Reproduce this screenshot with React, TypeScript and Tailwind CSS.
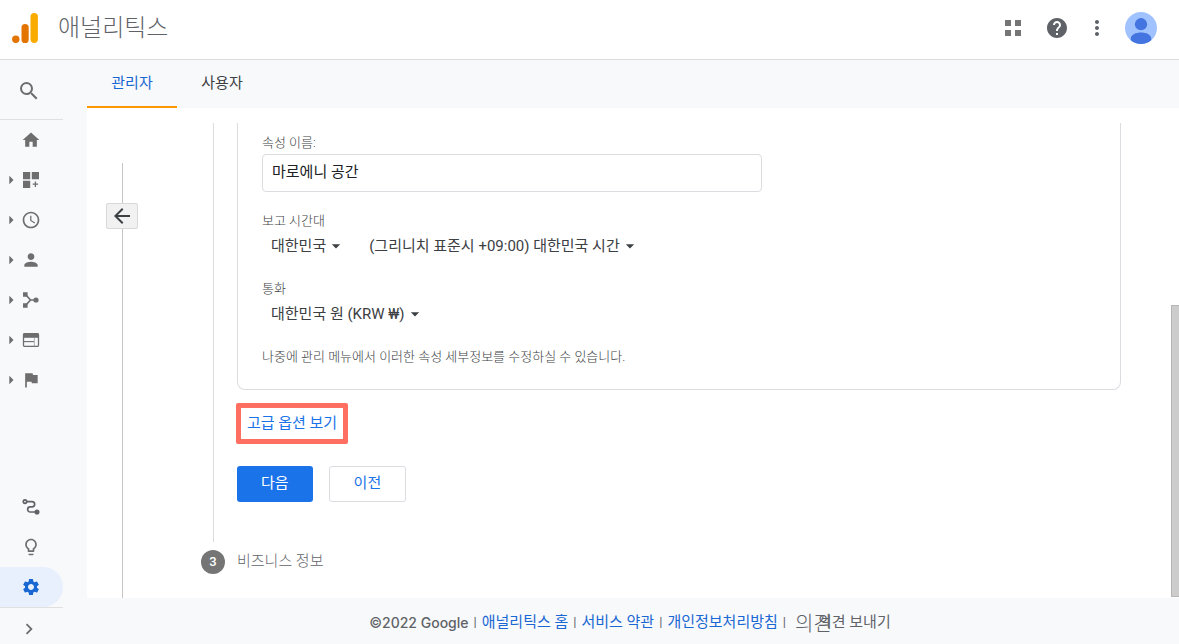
import React, { useState } from "react";
import type { ReactNode } from "react";
import {
  MdAccessTime,
  MdArrowBack,
  MdArrowDropDown,
  MdArrowRight,
  MdChevronRight,
  MdFlag,
  MdHelp,
  MdHome,
  MdLightbulbOutline,
  MdMoreVert,
  MdPerson,
  MdSearch,
  MdSettings,
} from "react-icons/md";

function AnalyticsLogo() {
  return (
    <svg width="28" height="32" viewBox="0 0 28 32" aria-hidden="true">
      <circle cx="3.8" cy="27.2" r="3.7" fill="#e37400" />
      <rect x="9.5" y="12" width="7.2" height="19" rx="3.6" fill="#e37400" />
      <rect x="18.5" y="1" width="7.4" height="30" rx="3.7" fill="#f9ab00" />
    </svg>
  );
}

function AppsIcon() {
  return (
    <svg width="24" height="24" viewBox="0 0 24 24" fill="#757575" aria-hidden="true">
      <path d="M4 4h6v6H4zM14 4h6v6h-6zM4 14h6v6H4zM14 14h6v6h-6z" />
    </svg>
  );
}

function AvatarIcon() {
  return (
    <svg width="32" height="32" viewBox="0 0 32 32" aria-hidden="true">
      <circle cx="16" cy="16" r="16" fill="#a0c3ff" />
      <circle cx="16" cy="12.2" r="6.1" fill="#4374e0" />
      <path d="M5.8 26.4c0-3.9 5.1-6 10.2-6s10.2 2.1 10.2 6v1.8A16 16 0 0 1 16 32a16 16 0 0 1-10.2-3.8z" fill="#4374e0" />
    </svg>
  );
}

function DashboardIcon() {
  return (
    <svg width="20" height="20" viewBox="0 0 20 20" aria-hidden="true">
      <path d="M2 2h7.200v7.200H2zM10.800 2H18v7.200h-7.200zM2 10.800h7.200V18H2z" fill="#6e6e6e" />
      <path d="M14.400 11.500v5.400M11.700 14.200h5.400" stroke="#6e6e6e" strokeWidth="1.300" />
    </svg>
  );
}

function MergeIcon() {
  return (
    <svg width="20" height="20" viewBox="0 0 20 20" aria-hidden="true">
      <path d="M4.500 4.500L9.500 10L4.500 15.500M9.500 10H15" fill="none" stroke="#6e6e6e" strokeWidth="1.700" />
      <path d="M2 2.300h4.600v4.500H2zM2 13.200h4.600v4.500H2z" fill="#6e6e6e" />
      <circle cx="15" cy="10" r="2.600" fill="#6e6e6e" />
    </svg>
  );
}

function WebIcon() {
  return (
    <svg width="20" height="20" viewBox="0 0 20 20" aria-hidden="true">
      <rect x="2.500" y="3.700" width="15" height="12.700" rx="1.200" fill="none" stroke="#6e6e6e" strokeWidth="1.300" />
      <path d="M2 3.600h16v4.200H2z" fill="#6e6e6e" />
      <path d="M2.500 11.600h10.500" stroke="#6e6e6e" strokeWidth="1.100" />
      <path d="M13.400 7.800v8.200" stroke="#6e6e6e" strokeWidth="1" strokeOpacity="0.500" />
    </svg>
  );
}

function RouteIcon() {
  return (
    <svg width="20" height="20" viewBox="0 0 20 20" fill="none" stroke="#5f6368" strokeWidth="1.700" aria-hidden="true">
      <circle cx="4" cy="4.600" r="1.700" />
      <path d="M5.800 4.600H11a2.600 2.600 0 0 1 0 5.300H9.200a2.500 2.500 0 0 0 0 5.100H15" />
      <circle cx="16" cy="15" r="1.700" fill="#5f6368" />
    </svg>
  );
}

function NavItem({
  label,
  children,
  expandable = false,
  active = false,
}: {
  label: string;
  children: ReactNode;
  expandable?: boolean;
  active?: boolean;
}) {
  return (
    <li>
      <button
        type="button"
        aria-label={label}
        className={
          active
            ? "flex h-10 w-full items-center rounded-r-full bg-[#e8f0fe] pl-px text-[#1967d2]"
            : "flex h-10 w-full items-center pl-px text-[#6e6e6e]"
        }
      >
        <span className="flex w-5 shrink-0">{expandable && <MdArrowRight size={20} />}</span>
        {children}
      </button>
    </li>
  );
}

function InlineSelect({ id, label, value }: { id: string; label: string; value: string }) {
  return (
    <span className="grid items-center">
      <select
        id={id}
        aria-label={label}
        defaultValue={value}
        className="col-start-1 row-start-1 h-5 appearance-none bg-transparent pr-5 text-[15px] leading-5 font-normal text-[#3c4043] outline-none [field-sizing:content]"
      >
        <option>{value}</option>
      </select>
      <MdArrowDropDown
        size={20}
        className="pointer-events-none col-start-1 row-start-1 justify-self-end text-[#3c4043]"
      />
    </span>
  );
}

function Sidebar() {
  return (
    <nav className="flex w-[63px] shrink-0 flex-col">
      <div className="flex h-15 items-center border-b border-[#e0e0e0] pt-0.5 pl-[17px]">
        <button type="button" aria-label="검색" className="text-[#6e6e6e]">
          <MdSearch size={24} />
        </button>
      </div>
      <ul>
        <NavItem label="홈"><MdHome size={20} /></NavItem>
        <NavItem label="맞춤설정" expandable><DashboardIcon /></NavItem>
        <NavItem label="실시간" expandable><MdAccessTime size={20} /></NavItem>
        <NavItem label="잠재고객" expandable><MdPerson size={20} /></NavItem>
        <NavItem label="획득" expandable><MergeIcon /></NavItem>
        <NavItem label="행동" expandable><WebIcon /></NavItem>
        <NavItem label="전환" expandable><MdFlag size={20} /></NavItem>
      </ul>
      <ul className="mt-auto border-b border-[#e0e0e0]">
        <NavItem label="기여"><RouteIcon /></NavItem>
        <NavItem label="탐색"><MdLightbulbOutline size={20} /></NavItem>
        <NavItem label="관리" active><MdSettings size={20} /></NavItem>
      </ul>
      <button type="button" aria-label="펼치기" className="flex h-9 items-center pt-1.5 pl-[18px] text-[#6e6e6e]">
        <MdChevronRight size={22} />
      </button>
    </nav>
  );
}

function PropertyCard() {
  const [name, setName] = useState("마로에니 공간");
  return (
    <section className="rounded-b-lg border border-t-0 border-[#dadce0] px-6 pt-2.5 pb-[22px]">
      <label htmlFor="property-name" className="block text-[13px] leading-5 text-[#3c4043]">
        속성 이름:
      </label>
      <input
        id="property-name"
        value={name}
        onChange={(e) => setName(e.target.value)}
        className="mt-px block h-[38px] w-full max-w-[500px] rounded border border-[#dadce0] bg-white px-[9px] pb-1.5 text-[15px] font-normal text-[#202124] outline-none"
      />
      <label htmlFor="country" className="mt-[19px] block text-[13px] leading-5 text-[#3c4043]">
        보고 시간대
      </label>
      <div className="mt-[5px] flex gap-[23px] pl-[9px]">
        <InlineSelect id="country" label="국가" value="대한민국" />
        <InlineSelect id="timezone" label="시간대" value="(그리니치 표준시 +09:00) 대한민국 시간" />
      </div>
      <label htmlFor="currency" className="mt-[23px] block text-[13px] leading-5 text-[#3c4043]">
        통화
      </label>
      <div className="mt-[5px] flex pl-[9px]">
        <InlineSelect id="currency" label="통화" value="대한민국 원 (KRW ₩)" />
      </div>
      <p className="mt-[23px] text-[13px] leading-5 text-[#3c4043]">
        나중에 관리 메뉴에서 이러한 속성 세부정보를 수정하실 수 있습니다.
      </p>
    </section>
  );
}

function Wizard() {
  return (
    <div className="mt-[15px] ml-[63px] flex-1">
      <div className="flex gap-3">
        <div className="flex w-6 justify-center">
          <div className="w-px bg-[#dadce0]" />
        </div>
        <div className="min-w-0 flex-1 pb-10">
          <PropertyCard />
          <button
            type="button"
            className="mt-[13px] -ml-px block h-[41px] w-28 rounded-xs border-5 border-[#ff6f61] pb-0.5 text-[15px] leading-5 font-normal text-[#1a73e8]"
          >
            고급 옵션 보기
          </button>
          <div className="mt-[22px] flex gap-4 font-normal">
            <button type="button" className="h-9 rounded-[3px] bg-[#1a73e8] px-6 pb-0.5 text-[15px] text-white">
              다음
            </button>
            <button
              type="button"
              className="h-9 rounded-[3px] border border-[#dadce0] bg-white px-6 pb-0.5 text-[15px] text-[#1a73e8]"
            >
              이전
            </button>
          </div>
        </div>
      </div>
      <div className="mt-2 flex items-center gap-3">
        <span className="flex size-6 items-center justify-center rounded-full bg-[#757575] text-[13px] font-medium text-white">
          3
        </span>
        <span className="pb-0.5 text-[15px] leading-5 text-[#5f6368]">비즈니스 정보</span>
      </div>
    </div>
  );
}

function Footer() {
  const links = ["애널리틱스 홈", "서비스 약관", "개인정보처리방침"];
  return (
    <footer className="flex h-[46px] items-center justify-center gap-[5px] pt-0.5 pr-1.5 text-[15px] font-normal whitespace-nowrap text-[#5f6368]">
      <span className="font-['Inter',sans-serif] text-[14px] font-medium">©2022 Google</span>
      {links.map((link) => (
        <React.Fragment key={link}>
          <span className="text-[13px]">|</span>
          <a href="#" className="text-[#1967d2]">{link}</a>
        </React.Fragment>
      ))}
      <span className="text-[13px]">|</span>
      <button type="button" className="ml-1 flex items-center">
        <span className="w-[23px] pt-1 text-[20px] leading-6 font-light">의견</span>
        <span>의견 보내기</span>
      </button>
    </footer>
  );
}

export default function App() {
  return (
    <div className="flex min-h-screen flex-col bg-[#f8f9fb] font-['Roboto','Noto_Sans_CJK_KR',sans-serif] font-light">
      <header className="flex h-15 items-center border-b border-[#dadce0] bg-white pr-[22px] pb-[3px] pl-3">
        <AnalyticsLogo />
        <h1 className="ml-[18px] text-[24px] leading-8 text-[#5f6368]">애널리틱스</h1>
        <div className="ml-auto flex items-center gap-4 text-[#5f6368]">
          <button type="button" aria-label="앱" className="mr-1"><AppsIcon /></button>
          <button type="button" aria-label="도움말"><MdHelp size={24} /></button>
          <button type="button" aria-label="더보기"><MdMoreVert size={24} /></button>
          <button type="button" aria-label="계정"><AvatarIcon /></button>
        </div>
      </header>
      <div className="flex flex-1">
        <Sidebar />
        <div className="ml-6 flex min-w-0 flex-1 flex-col">
          <div role="tablist" className="flex h-12 text-[15px] font-normal">
            <button
              type="button"
              role="tab"
              aria-selected="true"
              className="min-w-[90px] border-b-2 border-[#ff9800] px-6 text-[#1967d2]"
            >
              관리자
            </button>
            <button
              type="button"
              role="tab"
              aria-selected="false"
              className="min-w-[90px] border-b-2 border-transparent px-6 text-[#3c4043]"
            >
              사용자
            </button>
          </div>
          <main className="flex flex-1 bg-white">
            <div className="ml-[19px] flex w-8 flex-col items-center pt-[55px]">
              <div className="h-10 w-px bg-[#c4c4c4]" />
              <button
                type="button"
                aria-label="뒤로"
                className="flex h-[26px] w-8 items-center justify-center rounded-xs border border-[#d8d8d8] bg-[#f1f1f1] text-[#3c4043]"
              >
                <MdArrowBack size={24} />
              </button>
              <div className="w-px flex-1 bg-[#c4c4c4]" />
            </div>
            <Wizard />
            <div className="mt-[197px] mb-px ml-[50px] w-2 border border-r-0 border-[#b5b5b5] bg-[#cccccc]" />
          </main>
          <Footer />
        </div>
      </div>
    </div>
  );
}
